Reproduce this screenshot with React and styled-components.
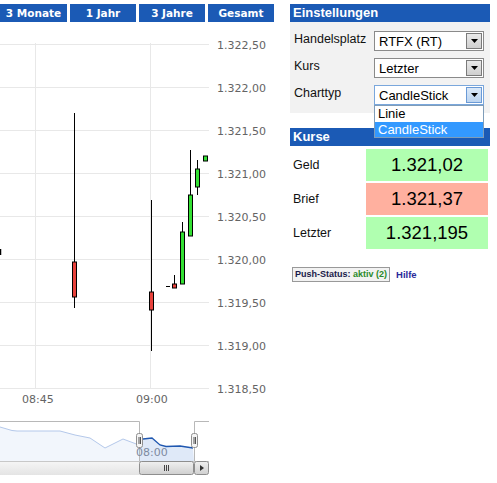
import styled, { createGlobalStyle } from "styled-components"

const GlobalStyle = createGlobalStyle`
  body {
    margin: 0;
    background: #fff;
    font-family: "Liberation Sans", Arial, sans-serif;
  }
`

const BLUE = "#1b5ab5"

const ranges = ["3 Monate", "1 Jahr", "3 Jahre", "Gesamt"]

const yLabels = ["1.322,50", "1.322,00", "1.321,50", "1.321,00", "1.320,50", "1.320,00", "1.319,50", "1.319,00", "1.318,50"]

// candles in page coordinates: x = centre, wick top/bottom, body top/bottom
const candles = [
  { x: 74.5, hi: 113, lo: 308, top: 262, bottom: 297, up: false },
  { x: 151.5, hi: 200, lo: 351, top: 292, bottom: 310, up: false },
  { x: 174.5, hi: 275, lo: 288, top: 284, bottom: 288, up: false },
  { x: 182.5, hi: 222, lo: 284, top: 232, bottom: 284, up: true },
  { x: 190.5, hi: 150, lo: 236, top: 195, bottom: 236, up: true },
  { x: 197.5, hi: 160, lo: 195, top: 169, bottom: 187, up: true },
  { x: 205.5, hi: 156, lo: 161, top: 156, bottom: 161, up: true },
]

const settings = [
  { label: "Handelsplatz", value: "RTFX (RT)" },
  { label: "Kurs", value: "Letzter" },
  { label: "Charttyp", value: "CandleStick", open: true },
]

const quotes = [
  { label: "Geld", value: "1.321,02", tone: "up" },
  { label: "Brief", value: "1.321,37", tone: "down" },
  { label: "Letzter", value: "1.321,195", tone: "up" },
]

const App = () => {
  return (
    <>
      <GlobalStyle />
      <Page>
        <ChartColumn>
          <RangeBar>
            {ranges.map((r) => (
              <RangeButton key={r}>{r}</RangeButton>
            ))}
          </RangeBar>
          <Chart />
        </ChartColumn>

        <SidePanel>
          <PanelHeader>Einstellungen</PanelHeader>
          <SettingsBox>
            {settings.map((s) => (
              <SettingRow key={s.label}>
                <SettingLabel>{s.label}</SettingLabel>
                <SelectWrap>
                  <FakeSelect $focus={s.open}>
                    <span>{s.value}</span>
                    <ArrowButton $focus={s.open}>
                      <svg width="7" height="4" viewBox="0 0 7 4">
                        <path d="M0 0h7L3.5 4z" fill="#000" />
                      </svg>
                    </ArrowButton>
                  </FakeSelect>
                  {s.open && (
                    <OptionList>
                      <OptionItem>Linie</OptionItem>
                      <OptionItem $active>CandleStick</OptionItem>
                    </OptionList>
                  )}
                </SelectWrap>
              </SettingRow>
            ))}
          </SettingsBox>

          <PanelHeader $gap>Kurse</PanelHeader>
          <QuoteList>
            {quotes.map((q) => (
              <QuoteRow key={q.label}>
                <QuoteLabel>{q.label}</QuoteLabel>
                <QuoteValue $tone={q.tone}>{q.value}</QuoteValue>
              </QuoteRow>
            ))}
          </QuoteList>

          <StatusRow>
            <PushBox>
              Push-Status: <Active>aktiv (2)</Active>
            </PushBox>
            <HelpLink>Hilfe</HelpLink>
          </StatusRow>
        </SidePanel>
      </Page>
    </>
  )
}

const Chart = () => {
  const gridY = yLabels.map((_, i) => 43.5 + i * 43.1)
  return (
    <ChartSvg width="280" height="461" viewBox="0 22 280 461">
      {/* grid */}
      {gridY.map((y) => (
        <line key={y} x1="0" x2="209" y1={Math.round(y) + 0.5} y2={Math.round(y) + 0.5} stroke="#e8e8e8" />
      ))}
      <line x1="35.5" x2="35.5" y1="43" y2="389" stroke="#e8e8e8" />
      <line x1="150.5" x2="150.5" y1="43" y2="389" stroke="#e8e8e8" />

      {yLabels.map((l, i) => (
        <AxisText key={l} x="217" y={Math.round(gridY[i]) + 4.5}>{l}</AxisText>
      ))}
      <AxisText x="22" y="403">08:45</AxisText>
      <AxisText x="136" y="403">09:00</AxisText>

      {/* candles */}
      <line x1="0.5" x2="0.5" y1="249" y2="255" stroke="#000" strokeWidth="1.5" />
      <line x1="166" x2="170" y1="286.5" y2="286.5" stroke="#000" />
      {candles.map((c) => (
        <g key={c.x}>
          <line x1={c.x} x2={c.x} y1={c.hi} y2={c.lo} stroke="#000" />
          <rect
            x={c.x - 2}
            y={c.top}
            width="4"
            height={Math.max(c.bottom - c.top, 3)}
            fill={c.up ? "#33e033" : "#e8423c"}
            stroke="#000"
          />
        </g>
      ))}

      {/* navigator */}
      <path
        d="M0 427 L12 430.5 L17 431 L60 431 L75 435 L90 438 L105 448 L123 439 L139 445 L139 461 L0 461 Z"
        fill="#f2f6fc"
      />
      <path d="M0 427 L12 430.5 L17 431 L60 431 L75 435 L90 438 L105 448 L123 439 L139 445" fill="none" stroke="#b4c8ea" />
      <path d="M139 440 L143 439 L152 438 L160 445 L166 446.5 L180 446 L193 448 L194 461 L139 461 Z" fill="#dfe9f8" />
      <path d="M139 440 L143 439 L152 438 L160 445 L166 446.5 L180 446 L193 448" fill="none" stroke="#1f57b0" strokeWidth="1.3" />
      <path d="M0 421.5 H139.5 V434 M194.5 434 V421.5 H209" fill="none" stroke="#b8b8b8" />
      <line x1="139.5" x2="139.5" y1="447" y2="461" stroke="#b8b8b8" />
      <line x1="194.5" x2="194.5" y1="447" y2="461" stroke="#b8b8b8" />
      <NavText x="136" y="456">08:00</NavText>

      {[136.5, 191.5].map((x) => (
        <g key={x}>
          <rect x={x} y="433.5" width="6" height="14" rx="2" fill="#f4f4f4" stroke="#909090" />
          <line x1={x + 2.5} x2={x + 2.5} y1="437" y2="444" stroke="#555" />
          <line x1={x + 4} x2={x + 4} y1="437" y2="444" stroke="#555" />
        </g>
      ))}

      {/* scrollbar */}
      <defs>
        <linearGradient id="track" x1="0" x2="0" y1="0" y2="1">
          <stop offset="0" stopColor="#f6f6f6" />
          <stop offset="1" stopColor="#e4e4e4" />
        </linearGradient>
        <linearGradient id="thumb" x1="0" x2="0" y1="0" y2="1">
          <stop offset="0" stopColor="#f0f0f0" />
          <stop offset="1" stopColor="#cfcfcf" />
        </linearGradient>
      </defs>
      <rect x="0" y="461" width="140" height="14" fill="url(#track)" />
      <line x1="0" x2="209" y1="461.5" y2="461.5" stroke="#c8c8c8" />
      <rect x="139.5" y="461.5" width="54" height="13" rx="2" fill="url(#thumb)" stroke="#8e8e8e" />
      <line x1="164.5" x2="164.5" y1="465" y2="471" stroke="#444" />
      <line x1="166.5" x2="166.5" y1="465" y2="471" stroke="#444" />
      <line x1="168.5" x2="168.5" y1="465" y2="471" stroke="#444" />
      <rect x="194.5" y="461.5" width="14" height="13" rx="2" fill="url(#thumb)" stroke="#8e8e8e" />
      <path d="M200 465 L204 468 L200 471 Z" fill="#333" />
    </ChartSvg>
  )
}

export default App

const Page = styled.div`
  display: flex;
  align-items: flex-start;
  width: 497px;
  height: 483px;
  overflow: hidden;
`

const ChartColumn = styled.div`
  width: 280px;
  display: flex;
  flex-direction: column;
`

const RangeBar = styled.div`
  display: flex;
  gap: 3px;
  padding-top: 4px;
`

const RangeButton = styled.div`
  width: 66px;
  height: 18px;
  background: ${BLUE};
  color: #fff;
  font-family: "DejaVu Sans", Verdana, sans-serif;
  font-weight: bold;
  font-size: 10.5px;
  line-height: 18px;
  text-align: center;
  &:first-child {
    width: 67px;
  }
`

const ChartSvg = styled.svg`
  display: block;
`

const AxisText = styled.text`
  font-family: "DejaVu Sans", Verdana, sans-serif;
  font-size: 11px;
  fill: #646464;
`

const NavText = styled(AxisText)`
  fill: #7d8aa0;
`

const SidePanel = styled.div`
  width: 200px;
  margin-left: 10px;
  padding-top: 4px;
  display: flex;
  flex-direction: column;
`

const PanelHeader = styled.div`
  height: 18px;
  line-height: 18px;
  background: ${BLUE};
  color: #fff;
  font-weight: bold;
  font-size: 13px;
  padding-left: 3px;
  margin-top: ${(p) => (p.$gap ? "15px" : "0")};
`

const SettingsBox = styled.div`
  background: #f2f2f2;
  padding: 9px 0 8px 4px;
  display: flex;
  flex-direction: column;
  gap: 7px;
`

const SettingRow = styled.div`
  display: flex;
  align-items: flex-start;
  height: 20px;
`

const SettingLabel = styled.div`
  width: 80px;
  font-size: 12.5px;
  color: #111;
  line-height: 15px;
  padding-top: 1px;
`

const SelectWrap = styled.div`
  position: relative;
`

const FakeSelect = styled.div`
  box-sizing: border-box;
  width: 110px;
  height: 20px;
  background: #fff;
  border: 1px solid ${(p) => (p.$focus ? "#7aa7dc" : "#8a8a8a")};
  display: flex;
  align-items: center;
  justify-content: space-between;
  padding-left: 4px;
  font-size: 13px;
  color: #000;
`

const ArrowButton = styled.div`
  box-sizing: border-box;
  width: 16px;
  height: 16px;
  margin-right: 1px;
  display: flex;
  align-items: center;
  justify-content: center;
  background: ${(p) => (p.$focus ? "linear-gradient(#dbe9f9, #bcd4f0)" : "linear-gradient(#e9e9e9, #cfcfcf)")};
  border: 1px solid ${(p) => (p.$focus ? "#6a9ad6" : "#7a7a7a")};
`

const OptionList = styled.div`
  position: absolute;
  top: 20px;
  left: 0;
  width: 110px;
  box-sizing: border-box;
  background: #fff;
  border: 1px solid #7f9db9;
  z-index: 2;
`

const OptionItem = styled.div`
  height: 15.5px;
  line-height: 15px;
  padding-left: 3px;
  font-size: 13px;
  background: ${(p) => (p.$active ? "#3399ff" : "#fff")};
  color: ${(p) => (p.$active ? "#fff" : "#000")};
`

const QuoteList = styled.div`
  display: flex;
  flex-direction: column;
  gap: 2px;
  margin-top: 3px;
`

const QuoteRow = styled.div`
  display: flex;
  align-items: center;
  height: 32px;
`

const QuoteLabel = styled.div`
  width: 73px;
  padding-left: 3px;
  font-size: 12.5px;
  color: #111;
`

const QuoteValue = styled.div`
  width: 122px;
  height: 32px;
  line-height: 32px;
  text-align: center;
  font-size: 18.5px;
  color: #000;
  background: ${(p) => (p.$tone === "down" ? "#ffb09f" : "#b0ffb0")};
`

const StatusRow = styled.div`
  display: flex;
  align-items: center;
  gap: 6px;
  margin-top: 18px;
  padding-left: 2px;
`

const PushBox = styled.div`
  box-sizing: border-box;
  height: 15px;
  line-height: 13px;
  border: 1px solid #999;
  background: #f2f2f2;
  font-size: 9px;
  font-weight: bold;
  color: #1a1a4a;
  padding: 0 2px;
  white-space: nowrap;
`

const Active = styled.span`
  color: #2a8a2a;
`

const HelpLink = styled.span`
  font-size: 9.5px;
  font-weight: bold;
  color: #2a2a9a;
`
